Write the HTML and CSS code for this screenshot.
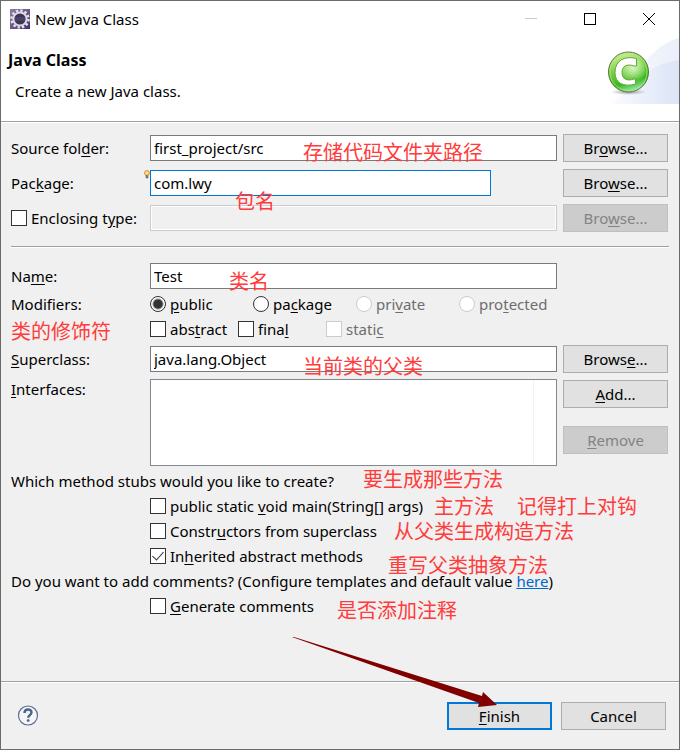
FILE: index.html
```html
<!DOCTYPE html>
<html lang="en">
<head>
  <meta charset="UTF-8" />
  <meta name="viewport" content="width=device-width, initial-scale=1.0" />
  <title>New Java Class</title>
  <link rel="stylesheet" href="styles.css">
</head>
<body>
  <div class="dialog">
    <div class="titlebar">
      <svg class="app-icon" width="20" height="20" viewBox="0 0 20 20">
        <defs>
          <linearGradient id="app" x1="0" y1="0" x2="1" y2="1">
            <stop offset="0" stop-color="#8d7fa8" />
            <stop offset="1" stop-color="#43306b" />
          </linearGradient>
        </defs>
        <rect width="20" height="20" fill="url(#app)" />
        <circle cx="10" cy="10" r="8.500" fill="none" stroke="#e4e1e6" stroke-width="2.500" stroke-dasharray="2.400 2.050" />
        <circle cx="10" cy="10" r="6.600" fill="#3a3552" stroke="#dedbe0" stroke-width="2" />
        <path d="M5 9h10M5 11h10" stroke="#56507a" />
      </svg>
      <span class="title">New Java Class</span>
      <div class="window-buttons">
        <button type="button" aria-label="Minimize" disabled>
          <svg width="12" height="12"><path d="M0 5.500h12" stroke="#ccc" /></svg>
        </button>
        <button type="button" aria-label="Maximize">
          <svg width="12" height="12"><rect x="0.500" y="0.500" width="11" height="11" fill="none" stroke="#000" /></svg>
        </button>
        <button type="button" aria-label="Close">
          <svg width="12" height="12"><path d="M0 0l12 12M12 0L0 12" stroke="#000" /></svg>
        </button>
      </div>
    </div>

    <header class="banner">
      <div class="banner-text">
        <h1>Java Class</h1>
        <p>Create a new Java class.</p>
      </div>
      <svg class="banner-image" width="74" height="67" viewBox="0 0 74 67">
        <defs>
          <linearGradient id="wave" x1="0" y1="0" x2="1" y2="0">
            <stop offset="0" stop-color="#fff" />
            <stop offset="0.5" stop-color="#ebf0fa" />
            <stop offset="1" stop-color="#dce4f6" />
          </linearGradient>
          <linearGradient id="ball" x1="0.3" y1="0" x2="0.6" y2="1">
            <stop offset="0" stop-color="#d0f29c" />
            <stop offset="0.4" stop-color="#7ed348" />
            <stop offset="0.75" stop-color="#36b81a" />
            <stop offset="1" stop-color="#a6efc0" />
          </linearGradient>
          <radialGradient id="shine" cx="0.6" cy="0.4" r="0.5">
            <stop offset="0" stop-color="#d8f5c0" />
            <stop offset="1" stop-color="#d8f5c0" stop-opacity="0" />
          </radialGradient>
          <radialGradient id="shadow">
            <stop offset="0" stop-color="#777" stop-opacity="0.7" />
            <stop offset="1" stop-color="#777" stop-opacity="0" />
          </radialGradient>
        </defs>
        <path d="M0 67C26 60 34 12 74 1V67Z" fill="url(#wave)" opacity="0.6" />
        <path d="M0 67C30 58 34 28 74 23V67Z" fill="url(#wave)" />
        <ellipse cx="23.500" cy="55" rx="18" ry="3" fill="url(#shadow)" />
        <circle cx="23.500" cy="35" r="20" fill="url(#ball)" stroke="#58783a" />
        <circle cx="23.500" cy="35" r="18.500" fill="none" stroke="#b5e68a" opacity="0.7" />
        <circle cx="25" cy="34" r="15" fill="url(#shine)" />
        <path d="M31.500 21.500v7.500h-2.500c-7-2.500-12 0-12 6.500 0 6.500 5 9 12 6.500h1.500v5c-12 3.500-20.500-1-20.500-11.500 0-12 9.500-17 21.500-14z" fill="#fff" stroke="#66a63a" />
      </svg>
    </header>

    <form class="form">
      <div class="row">
        <label for="source">Source fol<u>d</u>er:</label>
        <input type="text" id="source" value="first_project/src" />
        <button type="button">Br<u>o</u>wse...</button>
      </div>
      <div class="row">
        <label for="package">Pac<u>k</u>age:</label>
        <div class="assist">
          <svg class="bulb" width="6" height="9" viewBox="0 0 6 9">
            <circle cx="3" cy="3" r="2.400" fill="#ffdf9b" stroke="#d88a20" />
            <path d="M2 5v3h2V5" fill="#8b8478" stroke="#6b675f" stroke-width="0.600" />
          </svg>
          <input type="text" id="package" class="focused" value="com.lwy" />
        </div>
        <button type="button">Bro<u>w</u>se...</button>
      </div>
      <div class="row">
        <label class="check"><input type="checkbox" /><span>Enclosing t<u>y</u>pe:</span></label>
        <input type="text" aria-label="Enclosing type" disabled />
        <button type="button" disabled>Bro<u>w</u>se...</button>
      </div>

      <hr />

      <div class="row">
        <label for="name">Na<u>m</u>e:</label>
        <input type="text" id="name" value="Test" />
      </div>
      <div class="row modifiers">
        <span>Modifiers:</span>
        <div class="access">
          <label class="check"><input type="radio" name="access" checked /><span><u>p</u>ublic</span></label>
          <label class="check"><input type="radio" name="access" /><span>pa<u>c</u>kage</span></label>
          <label class="check off"><input type="radio" name="access" disabled /><span>pri<u>v</u>ate</span></label>
          <label class="check off"><input type="radio" name="access" disabled /><span>pro<u>t</u>ected</span></label>
        </div>
        <div class="flags">
          <label class="check"><input type="checkbox" /><span>abs<u>t</u>ract</span></label>
          <label class="check"><input type="checkbox" /><span>fina<u>l</u></span></label>
          <label class="check off"><input type="checkbox" disabled /><span>stati<u>c</u></span></label>
        </div>
      </div>
      <div class="row">
        <label for="superclass"><u>S</u>uperclass:</label>
        <input type="text" id="superclass" value="java.lang.Object" />
        <button type="button">Brows<u>e</u>...</button>
      </div>
      <div class="row interfaces">
        <span><u>I</u>nterfaces:</span>
        <div class="list"></div>
        <div class="list-buttons">
          <button type="button"><u>A</u>dd...</button>
          <button type="button" disabled><u>R</u>emove</button>
        </div>
      </div>

      <div class="options">
        <p>Which method stubs would you like to create?</p>
        <label class="check indent"><input type="checkbox" /><span>public static <u>v</u>oid main(String[] args)</span></label>
        <label class="check indent"><input type="checkbox" /><span>Constr<u>u</u>ctors from superclass</span></label>
        <label class="check indent"><input type="checkbox" checked /><span>In<u>h</u>erited abstract methods</span></label>
        <p>Do you want to add comments? (Configure templates and default value <a href="#">here</a>)</p>
        <label class="check indent"><input type="checkbox" /><span><u>G</u>enerate comments</span></label>
      </div>
    </form>

    <footer class="footer">
      <button type="button" class="help" aria-label="Help">
        <svg width="22" height="22" viewBox="0 0 22 22">
          <circle cx="11" cy="10.500" r="9.500" fill="#f5f5f5" stroke="#5a7196" stroke-width="1.200" />
          <path d="M7.500 8C7.500 3.200 14.700 3.500 14.500 7.500c-.1 2.500-3.300 2.700-3.300 5.200" fill="none" stroke="#4b628a" stroke-width="2.400" />
          <rect x="9.800" y="14.300" width="2.800" height="2.500" rx="1" fill="#4b628a" />
        </svg>
      </button>
      <button type="button" class="default"><u>F</u>inish</button>
      <button type="button">Cancel</button>
    </footer>

    <!-- notes drawn over the dialog -->
    <div class="notes" lang="zh-CN">
      <span class="note note-source">存储代码文件夹路径</span>
      <span class="note note-package">包名</span>
      <span class="note note-name">类名</span>
      <span class="note note-modifiers">类的修饰符</span>
      <span class="note note-super">当前类的父类</span>
      <span class="note note-stubs">要生成那些方法</span>
      <span class="note note-main">主方法</span>
      <span class="note note-tick">记得打上对钩</span>
      <span class="note note-constructors">从父类生成构造方法</span>
      <span class="note note-inherited">重写父类抽象方法</span>
      <span class="note note-comments">是否添加注释</span>
      <svg class="arrow" width="206" height="72" viewBox="0 0 206 72">
        <path d="M0 0H2L190 59 191 55 205 68 186 70 187 66Z" fill="#800000" />
      </svg>
    </div>
  </div>
</body>
</html>
```
FILE: styles.css
```css
* {
  box-sizing: border-box;
}

body {
  margin: 0;
  font-family: "Noto Sans", "Noto Sans CJK SC", sans-serif;
  font-size: 15px;
  line-height: 20px;
  color: #000;
}

h1, p {
  margin: 0;
}

u {
  text-underline-offset: 2px;
}

.dialog {
  position: relative;
  display: flex;
  flex-direction: column;
  min-height: 100vh;
  border: 1px solid #6b6b6b;
  background: #f0f0f0;
}

/* title bar */
.titlebar {
  display: flex;
  align-items: center;
  height: 36px;
  padding: 0 1px 0 9px;
  background: #fff;
}

.title {
  margin-left: 5px;
}

.window-buttons {
  display: flex;
  margin-left: auto;
}

.window-buttons button {
  display: flex;
  align-items: center;
  justify-content: center;
  width: 59px;
  height: 36px;
  padding: 0;
  border: none;
  background: none;
}

/* banner */
.banner {
  display: flex;
  justify-content: space-between;
  height: 85px;
  margin-bottom: 1px;
  border-bottom: 1px solid #a0a0a0;
  box-shadow: 0 1px 0 #fff;
  background: #fff;
}

.banner-text {
  padding: 13px 7px;
}

.banner h1 {
  font-size: 16px;
  line-height: 20px;
}

.banner p {
  margin: 11px 7px;
}

/* form */
.form {
  flex: 1;
  padding: 11px 11px 11px 10px;
}

.row {
  display: grid;
  grid-template-columns: 133px 1fr 105px;
  column-gap: 6px;
  align-items: center;
  min-height: 28px;
  margin-bottom: 7px;
}

input[type="text"] {
  width: 100%;
  height: 26px;
  padding: 0 3px;
  border: 1px solid #7a7a7a;
  background: #fff;
  font: inherit;
  color: #000;
}

input[type="text"].focused {
  width: calc(100% - 66px);
  border-color: #0078d7;
}

input[type="text"]:disabled {
  border-color: #ccc;
  box-shadow: inset 0 0 0 1px #fff;
  background: #f0f0f0;
}

.assist {
  position: relative;
  display: flex;
}

.bulb {
  position: absolute;
  top: 0;
  left: -6px;
}

.row button, .footer button {
  width: 105px;
  height: 28px;
  padding: 0;
  border: 1px solid #adadad;
  background: #e1e1e1;
  font: inherit;
  color: #000;
}

.row button:disabled {
  border-color: #bfbfbf;
  background: #ccc;
  color: #838383;
}

hr {
  height: 2px;
  margin: 14px -1px 14px 0;
  border: none;
  border-top: 1px solid #a0a0a0;
  background: #fff;
}

.check {
  display: flex;
  align-items: center;
  white-space: nowrap;
}

.check input {
  appearance: none;
  flex: none;
  width: 16px;
  height: 16px;
  margin: 0 4px 0 0;
  border: 1px solid #333;
  background: #fff;
}

.check input[type="radio"] {
  border-radius: 50%;
}

.check input[type="radio"]:checked {
  padding: 2px;
  background: #333 content-box;
  background: radial-gradient(circle, #333 0 4px, #fff 6px);
}

.check input[type="checkbox"]:checked::before {
  content: "";
  display: block;
  width: 5px;
  height: 10px;
  margin: 0 auto;
  border: solid #333;
  border-width: 0 1px 1px 0;
  transform: rotate(42deg);
}

.off {
  color: #6d6d6d;
}

.check.off input {
  border-color: #ccc;
}

.modifiers {
  grid-template-rows: 25px 25px;
  margin: -6px 0 4px;
}

.access {
  display: grid;
  grid-template-columns: repeat(4, 103px);
}

.flags {
  display: grid;
  grid-column: 2;
  grid-template-columns: repeat(3, 88px);
}

.interfaces {
  align-items: start;
  margin: -1px 0 2px;
}

.list {
  height: 87px;
  border: 1px solid #828790;
  background: linear-gradient(#eef2f9, #eef2f9) right 22px top / 1px 100% no-repeat #fff;
}

.list-buttons {
  display: grid;
  gap: 18px;
  padding-top: 1px;
}

.options {
  display: grid;
  grid-auto-rows: 25px;
  align-items: center;
}

.indent {
  margin-left: 139px;
}

a {
  color: #0066cc;
}

/* footer */
.footer {
  display: flex;
  align-items: center;
  gap: 9px;
  height: 68px;
  padding: 0 13px 0 16px;
  border-top: 1px solid #a0a0a0;
  box-shadow: inset 0 1px 0 #fff;
}

.footer .help {
  display: flex;
  width: 22px;
  height: 22px;
  margin-right: auto;
  border: none;
  background: none;
}

.footer .default {
  border: 2px solid #0078d7;
}

/* notes */
.notes {
  position: absolute;
  inset: 0;
  pointer-events: none;
}

.note {
  position: absolute;
  font-family: "Noto Sans CJK SC", sans-serif;
  font-size: 20px;
  line-height: 24px;
  white-space: nowrap;
  color: #ff3b3b;
}

.note-source { left: 302px; top: 139px; }
.note-package { left: 234px; top: 188px; }
.note-name { left: 228px; top: 268px; }
.note-modifiers { left: 10px; top: 318px; }
.note-super { left: 302px; top: 353px; }
.note-stubs { left: 362px; top: 466px; }
.note-main { left: 433px; top: 493px; }
.note-tick { left: 516px; top: 493px; }
.note-constructors { left: 393px; top: 518px; }
.note-inherited { left: 387px; top: 552px; }
.note-comments { left: 336px; top: 597px; }

.arrow {
  position: absolute;
  left: 291px;
  top: 636px;
}
```
